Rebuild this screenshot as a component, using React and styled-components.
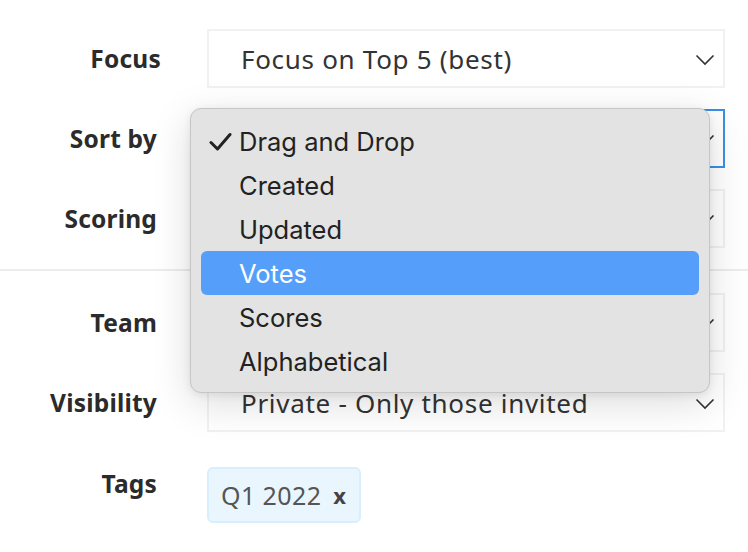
import React from 'react';
import styled, { createGlobalStyle } from 'styled-components';

const GlobalStyle = createGlobalStyle`
  html, body {
    margin: 0;
    padding: 0;
    background: #ffffff;
  }
  body {
    font-family: "Noto Sans", "Open Sans", sans-serif;
    color: #333333;
  }
`;

const Page = styled.div`
  width: 748px;
  height: 552px;
  overflow: hidden;
  padding-top: 29px;
  box-sizing: border-box;
`;

const Section = styled.div`
  display: flex;
  flex-direction: column;
  gap: 21px;
`;

const Row = styled.div`
  display: grid;
  grid-template-columns: 157px 518px;
  column-gap: 50px;
  align-items: ${(p) => (p.$top ? 'start' : 'center')};
`;

const Label = styled.div`
  text-align: right;
  font-size: 24.5px;
  font-weight: 700;
  letter-spacing: 0.2px;
  color: #2b2b2b;
  margin-right: ${(p) => p.$shift || 0}px;
`;

const Field = styled.div`
  position: relative;
  height: 59px;
  box-sizing: border-box;
  border: ${(p) => (p.$focused ? '2px solid #3a8fe6' : '2px solid #f1f1f1')};
  background: #ffffff;
  display: flex;
  align-items: center;
  justify-content: space-between;
  padding: 0 6px 0 32px;
`;

const Value = styled.span`
  font-size: 26px;
  letter-spacing: 0.7px;
  color: #333333;
  white-space: nowrap;
`;

const Divider = styled.hr`
  border: none;
  border-top: 2px solid #ececec;
  margin: 21px 0 22px;
`;

const TagsRow = styled(Row)`
  margin-top: 35px;
`;

const Chip = styled.div`
  justify-self: start;
  display: inline-flex;
  align-items: center;
  gap: 12px;
  height: 56px;
  box-sizing: border-box;
  padding: 0 13px 0 12px;
  background: #eaf6fe;
  border: 2px solid #d8eefc;
  border-radius: 6px;
`;

const ChipText = styled.span`
  font-size: 25px;
  letter-spacing: 0.4px;
  color: #555555;
`;

const ChipClose = styled.span`
  font-size: 22px;
  font-weight: 700;
  color: #444444;
`;

const Menu = styled.div`
  position: absolute;
  left: -19px;
  top: -3px;
  width: 520px;
  box-sizing: border-box;
  padding: 10px 10px 9px 10px;
  background: #e3e3e3;
  border: 1px solid #c6c6c6;
  border-radius: 11px;
  box-shadow: 0 10px 40px rgba(0, 0, 0, 0.14), 0 2px 8px rgba(0, 0, 0, 0.08);
  font-family: Inter, "Noto Sans", sans-serif;
  z-index: 10;
`;

const Item = styled.div`
  position: relative;
  height: 44px;
  display: flex;
  align-items: center;
  padding-left: 38px;
  border-radius: 6px;
  font-size: 25.5px;
  color: ${(p) => (p.$active ? '#ffffff' : '#222222')};
  background: ${(p) => (p.$active ? '#559ffa' : 'transparent')};
`;

const Check = styled.svg`
  position: absolute;
  left: 8px;
  top: 13px;
`;

const Chevron = () => (
  <svg width="24" height="24" viewBox="0 0 24 24">
    <path d="M3.5 8.5 L12 17 L20.5 8.5" fill="none" stroke="#333" strokeWidth="1.6" />
  </svg>
);

const options = ['Drag and Drop', 'Created', 'Updated', 'Votes', 'Scores', 'Alphabetical'];

export default function App() {
  return (
    <>
      <GlobalStyle />
      <Page>
        <Section>
          <Row>
            <Label $shift={-4}>Focus</Label>
            <Field>
              <Value>Focus on Top 5 (best)</Value>
              <Chevron />
            </Field>
          </Row>
          <Row>
            <Label>Sort by</Label>
            <Field $focused>
              <Value />
              <Chevron />
              <Menu>
                {options.map((o, i) => (
                  <Item key={o} $active={o === 'Votes'}>
                    {i === 0 && (
                      <Check width="24" height="20" viewBox="0 0 24 20">
                        <path d="M2 10.5 L8.5 17 L21 2.5" fill="none" stroke="#222" strokeWidth="3" strokeLinecap="round" strokeLinejoin="round" />
                      </Check>
                    )}
                    {o}
                  </Item>
                ))}
              </Menu>
            </Field>
          </Row>
          <Row>
            <Label>Scoring</Label>
            <Field>
              <Value />
              <Chevron />
            </Field>
          </Row>
        </Section>
        <Divider />
        <Section>
          <Row>
            <Label>Team</Label>
            <Field>
              <Value />
              <Chevron />
            </Field>
          </Row>
          <Row>
            <Label>Visibility</Label>
            <Field>
              <Value>Private - Only those invited</Value>
              <Chevron />
            </Field>
          </Row>
        </Section>
        <TagsRow $top>
          <Label>Tags</Label>
          <Chip>
            <ChipText>Q1 2022</ChipText>
            <ChipClose>x</ChipClose>
          </Chip>
        </TagsRow>
      </Page>
    </>
  );
}
